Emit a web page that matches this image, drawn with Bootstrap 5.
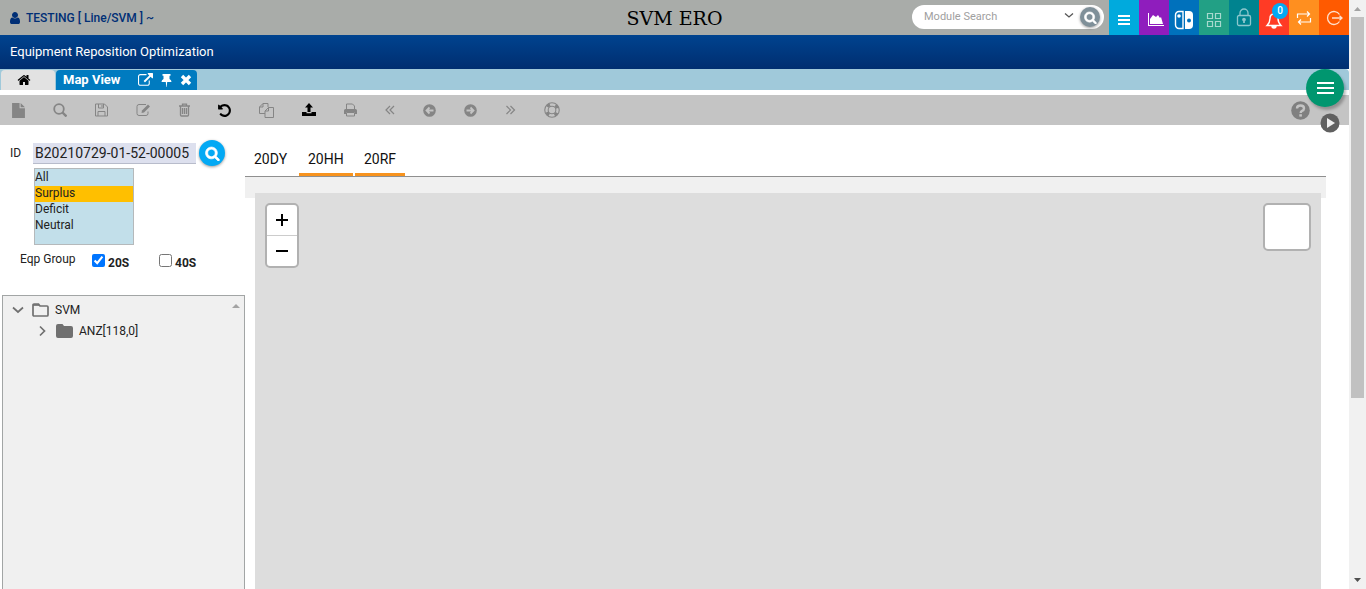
<!DOCTYPE html>
<html lang="en">
<head>
<meta charset="utf-8">
<meta name="viewport" content="width=device-width, initial-scale=1">
<title>SVM ERO</title>
<link href="https://cdn.jsdelivr.net/npm/bootstrap@5.3.0/dist/css/bootstrap.min.css" rel="stylesheet">
<script src="https://cdn.jsdelivr.net/npm/bootstrap@5.3.0/dist/js/bootstrap.bundle.min.js"></script>
<style>
body{font-family:Roboto,"Liberation Sans",sans-serif;font-size:12px;line-height:16px;color:#222;background:#fff}
button{border:0;padding:0;background:none;color:inherit;display:inline-flex;align-items:center;justify-content:center}
svg{display:block;flex:none}
a{color:inherit;text-decoration:none}
.topbar{height:35px;background:#a9aca9}
.topbar>div{flex:1 1 0}
.user-name{color:#002f76;font-weight:500}
.app-name{font:19px "DejaVu Serif",serif;color:#000}
.search-pill{width:192px;height:24px;background:#fff;border-radius:12px;margin:5px 5px 0 0}
.search-pill input{border:0;outline:0;width:144px;padding:0 0 0 12px;font-size:11px;line-height:22px;background:none}
.search-pill input::placeholder{color:#a0a0a0}
.go{width:20px;height:20px;flex:none;border-radius:50%;background:#7f9099;color:#fff;box-shadow:0 1px 3px #0006}
.tile{width:30px;height:35px;color:#fff}
.count{top:3px;left:13px;width:16px;height:16px;border-radius:50%;background:#03a9f4;font-size:10px;font-weight:500;line-height:16px;text-align:center}
.titlebar{height:34px;background:linear-gradient(#00438f,#002e70);color:#fff;font-size:13px;padding-left:10px}
.tabstrip{height:21px;background:#a0c9da;border-radius:0 4px 0 0;margin-bottom:5px}
.home-tab{width:54px;background:#e2e2e2;color:#000;margin:1px 1px 0 1px;border-radius:4px 4px 0 0}
.view-tab{background:#007bc0;color:#fff;font-size:13px;font-weight:700;border-radius:4px 4px 0 0;margin-top:1px;padding:0 5px 0 7px;width:141px}
.toolbar-row{height:30px;background:#c4c4c4;color:#808080;padding:0 39px 0 12px}
.tools{gap:28px}
.tools button:disabled{color:#858585}
.tools button{color:#000}
.fab{width:38px;height:38px;right:5px;top:69px;border-radius:50%;background:#00966f;color:#fff;box-shadow:2px 3px 3px #0004}
.play{right:9px;top:113px;color:#606060}
.side{width:245px}
.id-row{padding:15px 0 0 10px}
.id-row label{width:23px}
.id-input{width:163px;height:21px;border:0;border-bottom:1px solid #b8bccb;border-radius:0;background:#dde0ee;padding:0 2px;font-size:14px;color:#222}
.find{width:26px;height:26px;border-radius:50%;background:#03a9f4;color:#fff;margin-left:3px;box-shadow:0 1px 3px #0006}
.kinds{display:block;width:100px;height:77px;margin:2px 0 0 34px;border:1px solid #b5b9bb;border-radius:0;background:#c2dfea;padding:1px 0 0;overflow:hidden;font-size:12px;color:#222;outline:0}
.kinds option{height:16px;min-height:16px;padding:0;line-height:16px;color:#222}
.kinds option:checked{background:#ffbf00 linear-gradient(#ffbf00,#ffbf00);color:#222}
.groups{padding:6px 0 0 20px;height:50px}
.groups .title{width:72px}
.groups label{font-weight:700;width:54px;padding:4px 0 0 3px;color:#222}
.groups input{width:13px;height:13px;margin:3px 0 0}
.tree{margin-left:2px;background:#f0f0f0;border:1px solid #a2a5a5;border-bottom:0;padding:3px 0 0 9px;color:#222}
.tree ul{padding-left:24px}
.tree .node{height:21px}
.tree .node svg{color:#707070}
.tree .node span{margin-left:6px}
.tree-up{right:3px;top:7px;color:#a3a3a3}
.work{padding-top:22px;margin-right:23px}
.eqp-tabs{height:30px;border-bottom:1px solid #8f8f8f;gap:2px;padding-left:2px;font-size:14px;color:#111}
.eqp-tabs a{height:29px;padding:4px 9px 0 9px;width:54px;line-height:16px;border-bottom:3px solid transparent}
.eqp-tabs a:first-child{width:50px;padding-left:7px}
.eqp-tabs a:last-child{width:50px}
.eqp-tabs .marked{border-color:#f7931e}
.pane-head{height:21px;background:#f0f0f0}
.map{margin:-5px 5px 0 10px;background:#ddd;padding:10px}
.zoomer{width:34px;border:2px solid #b1b1b1;border-radius:5px;background:#fff;color:#000;overflow:hidden}
.zoomer button{height:30px}
.zoomer button:first-child{height:31px;border-bottom:1px solid #ccc}
.layers{width:48px;height:48px;border:2px solid #b1b1b1;border-radius:5px;background:#fff}
.scroller{width:17px;background:#f1f1f1;padding:0 2px;color:#a3a3a3}
.thumb{flex:0 1 381px;background:#c1c1c1}
.cap{height:17px;flex:none}
</style>
</head>
<body class="d-flex vh-100 overflow-hidden">
<svg class="d-none">
<symbol id="search" viewBox="0 0 1792 1792"><path fill="currentColor" d="M1216 832q0-185-131.500-316.500t-316.500-131.500-316.500 131.500-131.500 316.500 131.500 316.500 316.500 131.500 316.500-131.500 131.500-316.500zm512 832q0 52-38 90t-90 38q-54 0-90-38l-343-342q-179 124-399 124-143 0-273.500-55.500t-225-150-150-225-55.500-273.500 55.500-273.500 150-225 225-150 273.500-55.500 273.500 55.500 225 150 150 225 55.500 273.500q0 220-124 399l343 343q37 37 37 90z"/></symbol>
</svg>
<div class="d-flex flex-column flex-grow-1 position-relative">
<header class="topbar d-flex">
  <div class="d-flex align-items-center user-name">
    <svg class="ms-2" width="14" height="14" viewBox="0 0 1792 1792"><path fill="currentColor" d="M1536 1399q0 109-62.500 187t-150.500 78h-854q-88 0-150.500-78t-62.500-187q0-85 8.500-160.500t31.500-152 58.500-131 94-89 134.500-34.500q131 128 313 128t313-128q76 0 134.500 34.500t94 89 58.500 131 31.500 152 8.500 160.500zm-256-887q0 159-112.500 271.500t-271.500 112.500-271.500-112.500-112.500-271.500 112.500-271.500 271.500-112.500 271.500 112.500 112.500 271.500z"/></svg>
    <span class="ms-1">TESTING [ Line/SVM ] ~</span>
  </div>
  <h1 class="app-name m-0 align-self-center">SVM ERO</h1>
  <div class="d-flex justify-content-end">
    <form class="search-pill d-flex align-items-center justify-content-between pe-1">
      <input type="text" placeholder="Module Search" aria-label="Module Search">
      <svg class="mb-1" width="16" height="10" viewBox="0 0 16 10" fill="none" stroke="#555" stroke-width="1.300"><path d="M5 3.500l4 3.500 4-3.500"/></svg>
      <button type="button" class="go" aria-label="Search"><svg width="13" height="13"><use href="#search" stroke="currentColor" stroke-width="80"/></svg></button>
    </form>
    <button class="tile" style="background:#00aadd" aria-label="Menu"><svg width="14" height="14" viewBox="0 0 14 14" class="mt-1" fill="currentColor"><path d="M1 2h12v2H1zM1 6h12v2H1zM1 10h12v2H1z"/></svg></button>
    <button class="tile" style="background:#8f1dbd" aria-label="Charts"><svg width="17" height="14" viewBox="0 0 17 14" class="mt-1 ms-1" fill="currentColor"><path d="M0 0h1v12h15v1H0zM2 11V6l3-4 3 2 2-2 2 3 1-1 2 7z"/></svg></button>
    <button class="tile" style="background:#0071bc" aria-label="Switch"><svg width="20" height="20" viewBox="0 0 20 20" class="mt-1"><path d="M5 1.500h4v17H5a3.500 3.500 0 0 1-3.500-3.500V5A3.500 3.500 0 0 1 5 1.500z" fill="none" stroke="#fff" stroke-width="1.400"/><circle cx="5" cy="6" r="1.800" fill="#fff"/><path d="M11 1h4a4 4 0 0 1 4 4v10a4 4 0 0 1-4 4h-4z" fill="#fff"/><circle cx="15" cy="10.500" r="2" fill="#0071bc"/></svg></button>
    <button class="tile" style="background:#22a085" aria-label="Modules"><svg width="16" height="16" viewBox="0 0 16 16" class="mt-1" fill="none" stroke="#a6d9ce" stroke-width="1.200"><path d="M1.500 1.500h5v5h-5zM9.500 1.500h5v5h-5zM1.500 9.500h5v5h-5zM9.500 9.500h5v5h-5z"/></svg></button>
    <button class="tile" style="background:#00838f" aria-label="Lock"><svg width="16" height="19" viewBox="0 0 16 19" fill="none" stroke="#8cc7cd" stroke-width="1.300"><rect x="1.500" y="7.500" width="13" height="10" rx="1.500"/><path d="M4 7.500V5a4 4 0 0 1 8 0v2.500"/><circle cx="8" cy="11.500" r="1.200" fill="#8cc7cd"/><path d="M8 12v3" stroke-width="1.800"/></svg></button>
    <button class="tile position-relative" style="background:#ff3b25" aria-label="Alerts"><svg width="18" height="18" viewBox="0 0 18 18" class="mt-1" fill="none" stroke="#fff" stroke-width="1.400"><path d="M2 14.500h14c-2-2-3-4-3-7C13 4.500 11.500 3 9 3S5 4.500 5 7.500c0 3-1 5-3 7z"/><path d="M7 15a2 2 0 0 0 4 0z" fill="#fff"/></svg><span class="count position-absolute">0</span></button>
    <button class="tile" style="background:#ff8f1f" aria-label="Switch user"><svg width="16" height="16" viewBox="0 0 16 16" fill="none" stroke="#fff" stroke-width="1.200"><path d="M1.500 8V4h12M11 1.500L13.500 4 11 6.500M14.500 8v4h-12M5 9.500L2.500 12 5 14.500"/></svg></button>
    <button class="tile" style="background:#ff5a00" aria-label="Log out"><svg width="17" height="16" viewBox="0 0 17 16" fill="none" stroke="#ffe0cc" stroke-width="1.300"><path d="M13.500 4.500a6.500 6.500 0 1 0 0 7M6 8h10M13.500 5.800L16 8l-2.500 2.200"/></svg></button>
  </div>
</header>
<div class="titlebar d-flex align-items-center">Equipment Reposition Optimization</div>
<nav class="tabstrip d-flex" aria-label="Open views">
  <a href="#" class="home-tab d-flex align-items-center justify-content-center" aria-label="Home"><svg class="me-2" width="14" height="14" viewBox="0 0 1792 1792"><path fill="currentColor" d="M1472 992v480q0 26-19 45t-45 19h-384v-384h-256v384h-384q-26 0-45-19t-19-45v-480q0-1 .5-3t.5-3l575-474 575 474q1 2 1 6zm223-69l-62 74q-8 9-21 11h-3q-13 0-21-7l-692-577-692 577q-12 8-24 7-13-2-21-11l-62-74q-8-10-7-23.500t11-21.500l719-599q32-26 76-26t76 26l244 204v-195q0-14 9-23t23-9h192q14 0 23 9t9 23v408l219 182q10 8 11 21.500t-7 23.500z"/></svg></a>
  <div class="view-tab d-flex align-items-center justify-content-between">
    <a href="#">Map View</a>
    <div class="d-flex align-items-center gap-2">
      <button aria-label="Open in new window"><svg width="15" height="15" viewBox="0 0 1792 1792"><path fill="currentColor" d="M1408 928v320q0 119-84.500 203.500t-203.500 84.500h-832q-119 0-203.500-84.500t-84.500-203.500v-832q0-119 84.500-203.500t203.500-84.500h704q14 0 23 9t9 23v64q0 14-9 23t-23 9h-704q-66 0-113 47t-47 113v832q0 66 47 113t113 47h832q66 0 113-47t47-113v-320q0-14 9-23t23-9h64q14 0 23 9t9 23zm384-864v512q0 26-19 45t-45 19-45-19l-176-176-652 652q-10 10-23 10t-23-10l-114-114q-10-10-10-23t10-23l652-652-176-176q-19-19-19-45t19-45 45-19h512q26 0 45 19t19 45z"/></svg></button>
      <button aria-label="Pin"><svg width="11" height="13" viewBox="0 0 11 13" fill="currentColor"><path d="M1.500 0h8v1.800h-1V5q2 1 2 3H6.200L5.700 13h-.4L4.800 8H.5q0-2 2-3V1.800h-1z"/></svg></button>
      <button aria-label="Close"><svg width="12" height="12" viewBox="0 0 12 12"><path d="M2 2l8 8M10 2l-8 8" stroke="currentColor" stroke-width="3.400"/></svg></button>
    </div>
  </div>
</nav>
<div class="toolbar-row d-flex align-items-center justify-content-between">
  <div class="tools d-flex align-items-center">
    <button disabled aria-label="New"><svg width="13" height="15" viewBox="0 0 12 14" fill="currentColor"><path d="M0 0h7v5h5v9H0zM8 0l4 4H8z"/></svg></button>
    <button disabled aria-label="Search"><svg width="14" height="14" viewBox="0 0 14 14" fill="none" stroke="currentColor"><circle cx="6" cy="6" r="4.800" stroke-width="1.800"/><path d="M9.500 9.500l4 4" stroke-width="2.400"/></svg></button>
    <button disabled aria-label="Save"><svg width="13" height="14" viewBox="0 0 13 14" fill="none" stroke="currentColor"><path d="M.5 1h9l3 3v9H.5zM3 13V8.500h7V13M3.500 1v4h5V1M7 2v2"/></svg></button>
    <button disabled aria-label="Edit"><svg width="15" height="14" viewBox="0 0 15 14" fill="none" stroke="currentColor"><path d="M10 1.500H3A2 2 0 0 0 1 3.500v7a2 2 0 0 0 2 2h7a2 2 0 0 0 2-2V8.500"/><path d="M5.500 10l.5-2.500 6-6 2 2-6 6z" fill="currentColor" stroke="none"/></svg></button>
    <button disabled aria-label="Delete"><svg width="11" height="14" viewBox="0 0 11 14" fill="none" stroke="currentColor"><path d="M0 3h11M3.500 3V1.200h4V3M1.500 3v9q0 1 1 1h6q1 0 1-1V3M3.500 5v6M5.500 5v6M7.500 5v6" stroke-width="1.300"/></svg></button>
    <button aria-label="Undo"><svg width="13" height="15" viewBox="0 0 1536 1792"><path fill="currentColor" d="M1536 896q0 156-61 298t-164 245-245 164-298 61q-172 0-327-72.500t-264-204.500q-7-10-6.500-22.500t8.500-20.500l137-138q10-9 25-9 16 2 23 12 73 95 179 147t225 52q104 0 198.500-40.500t163.500-109.500 109.500-163.500 40.500-198.500-40.500-198.500-109.500-163.500-163.500-109.500-198.500-40.500q-98 0-188 35.500t-160 101.500l137 138q31 30 14 69-17 40-59 40h-448q-26 0-45-19t-19-45v-448q0-42 40-59 39-17 69 14l130 129q107-101 244.500-156.500t284.500-55.500q156 0 298 61t245 164 164 245 61 298z"/></svg></button>
    <button disabled aria-label="Copy"><svg width="15" height="15" viewBox="0 0 15 15" fill="none" stroke="currentColor"><path d="M6 10.500H.5V4L4 .5h5V4M4 .5V4H.5M6 14.500V8l3.500-3.500h5v10zM9.500 4.500V8H6"/></svg></button>
    <button aria-label="Upload"><svg width="14" height="14" viewBox="0 0 14 14" fill="currentColor"><path d="M7 0l4 4.500H8.500V9h-3V4.500H3zM0 9h4.500v1.200h5V9H14v4H0z"/></svg></button>
    <button disabled aria-label="Print"><svg width="13" height="14" viewBox="0 0 13 14" fill="none" stroke="currentColor"><path d="M2.500 6V1h6l2 2v3M2.500 9.500h8V13h-8z"/><path d="M0 11V7.500Q0 6 1.500 6h10Q13 6 13 7.500V11h-2V9H2v2z" fill="currentColor" stroke="none"/></svg></button>
    <button disabled aria-label="First"><svg width="10" height="10" viewBox="0 0 10 10" fill="none" stroke="currentColor"><path d="M5 1L1 5l4 4M9 1L5 5l4 4" stroke-width="1.200"/></svg></button>
    <button disabled aria-label="Previous"><svg width="13" height="13" viewBox="0 0 13 13"><circle cx="6.500" cy="6.500" r="6.300" fill="currentColor"/><path d="M10.500 6.500H4M6.500 3.500l-3 3 3 3" fill="none" stroke="#c4c4c4" stroke-width="1.800"/></svg></button>
    <button disabled aria-label="Next"><svg width="13" height="13" viewBox="0 0 13 13"><circle cx="6.500" cy="6.500" r="6.300" fill="currentColor"/><path d="M2.500 6.500H9M6.500 3.500l3 3-3 3" fill="none" stroke="#c4c4c4" stroke-width="1.800"/></svg></button>
    <button disabled aria-label="Last"><svg width="11" height="10" viewBox="0 0 11 10" fill="none" stroke="currentColor"><path d="M1.500 1l4 4-4 4M5.500 1l4 4-4 4" stroke-width="1.200"/></svg></button>
    <button disabled aria-label="Support"><svg width="16" height="16" viewBox="0 0 15 15" fill="none" stroke="currentColor"><circle cx="7.500" cy="7.500" r="6.800"/><circle cx="7.500" cy="7.500" r="3.600"/><circle cx="7.500" cy="7.500" r="5.200" stroke-width="3" stroke-dasharray="3 5.168" stroke-dashoffset="-2.584"/></svg></button>
  </div>
  <button aria-label="Help"><svg width="19" height="19" viewBox="0 0 19 19"><circle cx="9.500" cy="9.500" r="9.300" fill="currentColor"/><path d="M6 7.500Q6 4.500 9.500 4.500T13 7.500Q13 9 11 9.800 9.700 10.300 9.700 12" fill="none" stroke="#c4c4c4" stroke-width="2.400"/><path d="M8.300 13.200h2.600v2.400H8.300z" fill="#c4c4c4"/></svg></button>
</div>
<button class="fab position-absolute" aria-label="Actions"><svg width="17" height="12" viewBox="0 0 17 12" fill="currentColor"><path d="M0 0h17v2H0zM0 5h17v2H0zM0 10h17v2H0z"/></svg></button>
<button class="play position-absolute" aria-label="Run"><svg width="20" height="20" viewBox="0 0 20 20"><circle cx="10" cy="10" r="9.500" fill="currentColor"/><path d="M7 5l8 5-8 5z" fill="#eee"/></svg></button>
<main class="d-flex flex-grow-1">
  <aside class="side d-flex flex-column flex-shrink-0">
    <div class="id-row d-flex align-items-center">
      <label for="plan">ID</label>
      <input id="plan" class="id-input" type="text" value="B20210729-01-52-00005">
      <button class="find" aria-label="Find ID"><svg width="15" height="15"><use href="#search" stroke="currentColor" stroke-width="80"/></svg></button>
    </div>
    <select class="kinds" size="4" aria-label="Balance"><option>All</option><option selected>Surplus</option><option>Deficit</option><option>Neutral</option></select>
    <div class="groups d-flex align-items-start">
      <span class="title">Eqp Group</span>
      <input type="checkbox" id="g20" checked><label for="g20">20S</label>
      <input type="checkbox" id="g40"><label for="g40">40S</label>
    </div>
    <div class="tree flex-grow-1 position-relative">
      <svg class="tree-up position-absolute" width="10" height="5" viewBox="0 0 10 5"><path fill="currentColor" d="M1 5l4-4 4 4z"/></svg>
      <div class="node d-flex align-items-center">
        <svg width="12" height="8" viewBox="0 0 12 8" fill="none" stroke="currentColor" stroke-width="1.700"><path d="M1 1.500L6 6l5-4.500"/></svg>
        <svg class="ms-2" width="17" height="14" viewBox="0 0 17 14" fill="none" stroke="currentColor" stroke-width="1.700"><path d="M1 2q0-1 1-1h4.500L8 3h7q1 0 1 1v8q0 1-1 1H2q-1 0-1-1z"/><path d="M1 2h6"/></svg>
        <span>SVM</span>
      </div>
      <ul class="list-unstyled m-0"><li class="node d-flex align-items-center">
        <svg width="12" height="12" viewBox="0 0 12 12" fill="none" stroke="currentColor" stroke-width="1.700"><path d="M4 1.500L8.500 6 4 10.500"/></svg>
        <svg class="ms-2" width="17" height="14" viewBox="0 0 17 14" fill="currentColor"><path d="M0 2q0-2 2-2h4.500L8 2h7q2 0 2 2v8q0 2-2 2H2q-2 0-2-2z"/></svg>
        <span>ANZ[118,0]</span>
      </li></ul>
    </div>
  </aside>
  <section class="work d-flex flex-column flex-grow-1">
    <nav class="eqp-tabs d-flex" aria-label="Equipment types"><a href="#">20DY</a><a href="#" class="marked">20HH</a><a href="#" class="marked">20RF</a></nav>
    <div class="pane-head"></div>
    <div class="map d-flex justify-content-between align-items-start flex-grow-1">
      <div class="zoomer d-flex flex-column">
        <button aria-label="Zoom in"><svg width="14" height="14" viewBox="0 0 14 14"><path d="M1 7h12M7 1v12" stroke="currentColor" stroke-width="2"/></svg></button>
        <button aria-label="Zoom out"><svg width="14" height="14" viewBox="0 0 14 14"><path d="M1 7h12" stroke="currentColor" stroke-width="2"/></svg></button>
      </div>
      <button class="layers" aria-label="Layers"></button>
    </div>
  </section>
</main>
</div>
<div class="scroller d-flex flex-column flex-shrink-0" aria-hidden="true">
  <svg class="cap" width="13" viewBox="0 0 13 17"><path fill="currentColor" d="M3 11l3.500-4 3.500 4z"/></svg>
  <div class="thumb"></div>
  <svg class="cap mt-auto" width="13" viewBox="0 0 13 17"><path fill="#505050" d="M3 6l3.500 4 3.500-4z"/></svg>
</div>
</body>
</html>
